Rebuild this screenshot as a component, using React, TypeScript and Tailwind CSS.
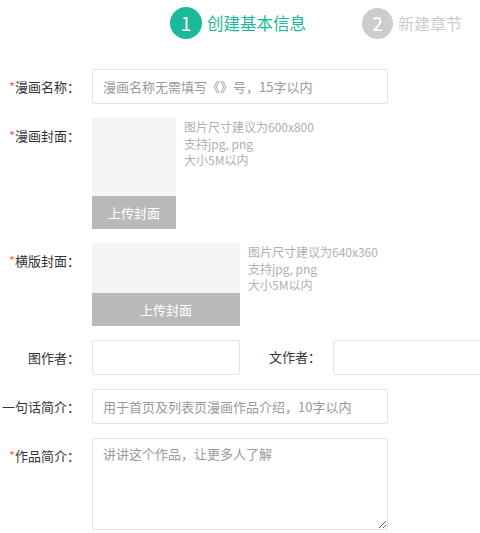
import React from 'react';

const font = "font-['Noto_Sans_CJK_SC','Noto_Sans',sans-serif]";

function Label({ text, required }: { text: string; required?: boolean }) {
  return (
    <div className="w-[80px] mr-[12px] shrink-0 text-right text-[13px] leading-[35px] text-[#333] whitespace-nowrap">
      {required && <span className="text-[#f5704f]">*</span>}
      {text}：
    </div>
  );
}

function Uploader({ w, h, hints }: { w: string; h: string; hints: string[] }) {
  return (
    <div className="flex">
      <div className={`${w} ${h} bg-[#f4f4f4] flex flex-col justify-end`}>
        <div className="h-[33px] bg-[#b9b9b9] text-white text-[13px] flex items-center justify-center">
          上传封面
        </div>
      </div>
      <div className="ml-[8px] pt-[1px] text-[12px] leading-[16.5px] text-[#b0b0b0]">
        {hints.map(t => (
          <div key={t}>{t}</div>
        ))}
      </div>
    </div>
  );
}

export default function App() {
  const inputCls =
    'h-[35px] border border-[#e4e4e4] rounded-[2px] px-[10px] text-[13px] text-[#333] placeholder:text-[#9a9a9a] outline-none bg-white';

  return (
    <div className={`${font} w-[480px] bg-white overflow-hidden`}>
      {/* Steps */}
      <div className="flex items-center pl-[170px] pt-[7px] h-[39px]">
        <div className="w-[32px] h-[32px] rounded-full bg-[#1bb999] text-white text-[19px] flex items-center justify-center">1</div>
        <span className="ml-[5px] text-[16.5px] text-[#1bb999]">创建基本信息</span>
        <div className="ml-[56px] w-[31px] h-[31px] rounded-full bg-[#cccccc] text-white text-[19px] flex items-center justify-center">2</div>
        <span className="ml-[5px] text-[16px] text-[#cccccc]">新建章节</span>
      </div>

      <div className="mt-[30px] flex flex-col">
        <div className="flex">
          <Label text="漫画名称" required />
          <input className={`${inputCls} w-[296px]`} placeholder="漫画名称无需填写《》号，15字以内" />
        </div>

        <div className="flex mt-[14px]">
          <Label text="漫画封面" required />
          <Uploader w="w-[84px]" h="h-[111px]" hints={['图片尺寸建议为600x800', '支持jpg, png', '大小5M以内']} />
        </div>

        <div className="flex mt-[14px]">
          <Label text="横版封面" required />
          <Uploader w="w-[148px]" h="h-[83px]" hints={['图片尺寸建议为640x360', '支持jpg, png', '大小5M以内']} />
        </div>

        <div className="flex mt-[14px]">
          <Label text="图作者" />
          <input className={`${inputCls} w-[148px] h-[34px]`} />
          <div className="w-[93px] shrink-0 text-right pr-[12px] text-[13px] leading-[34px] text-[#333]">文作者：</div>
          <input className={`${inputCls} w-[148px] h-[34px] shrink-0`} />
        </div>

        <div className="flex mt-[14px]">
          <Label text="一句话简介" />
          <input className={`${inputCls} w-[296px]`} placeholder="用于首页及列表页漫画作品介绍，10字以内" />
        </div>

        <div className="flex mt-[14px]">
          <Label text="作品简介" required />
          <textarea
            className="w-[296px] h-[92px] border border-[#e4e4e4] rounded-[2px] px-[10px] py-[5px] text-[13px] text-[#333] placeholder:text-[#9a9a9a] outline-none"
            placeholder="讲讲这个作品，让更多人了解"
          />
        </div>
      </div>
    </div>
  );
}
